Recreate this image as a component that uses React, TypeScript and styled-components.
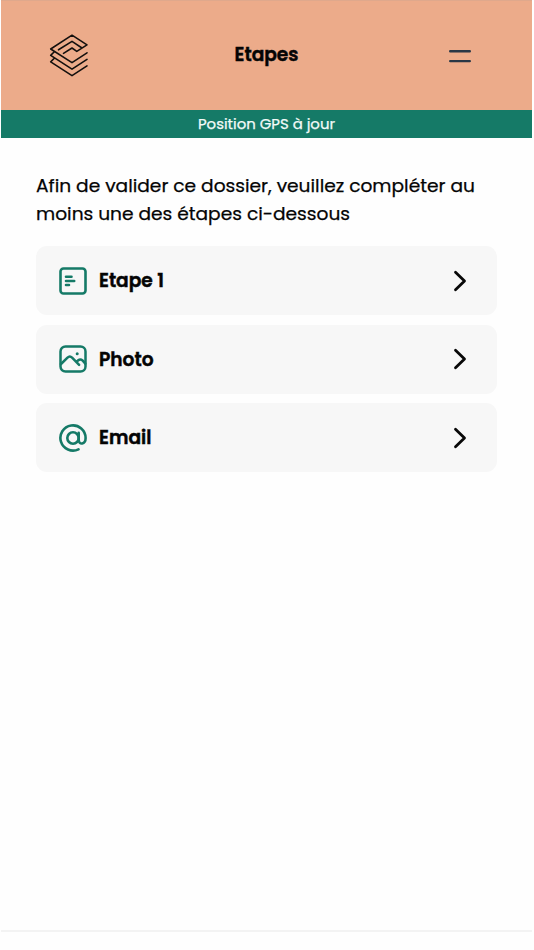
import React from "react";
import styled, { createGlobalStyle } from "styled-components";

const GlobalStyle = createGlobalStyle`
  * { box-sizing: border-box; }
  body { margin: 0; background: #fefefe; font-family: Poppins, Inter, sans-serif; color: #040404; -webkit-text-stroke: 0.25px currentColor; }
`;

const Screen = styled.div`
  height: 950px;
  margin-left: 1px;
  width: 531px;
  display: flex;
  flex-direction: column;
`;

const Header = styled.header`
  height: 110px;
  flex: none;
  background: #ecab8a;
  border-top: 1px solid #dfa88c;
  display: grid;
  grid-template-columns: 1fr auto 1fr;
  align-items: center;
  padding: 0 47px 2px;
`;

const Title = styled.h1`
  margin: 0;
  font-size: 18.6px;
  line-height: 28px;
  font-weight: 600;
  -webkit-text-stroke-width: 0.45px;
`;

const MenuButton = styled.button`
  justify-self: end;
  border: 0;
  margin: 2px 13px 0 0;
  padding: 0;
  background: none;
  display: flex;
`;

const Banner = styled.div`
  height: 28px;
  flex: none;
  background: #157a67;
  color: #f3faf8;
  font-size: 14.9px;
  line-height: 28px;
  font-weight: 400;
  text-align: center;
`;

const Main = styled.main`
  flex: 1;
  padding: 34.4px 34px 0 35px;
`;

const Intro = styled.p`
  margin: 0 0 19px;
  font-size: 18.6px;
  line-height: 27.5px;
  white-space: nowrap;
`;

const Line = styled.span`
  display: block;
`;

const Steps = styled.div`
  display: flex;
  flex-direction: column;
  gap: 9.4px;
`;

const Step = styled.button`
  height: 69px;
  width: 461px;
  border: 0;
  border-radius: 11px;
  background: #f7f7f7;
  display: flex;
  align-items: center;
  gap: 12px;
  padding: 0 29px 0 23px;
  font: inherit;
  color: inherit;
  text-align: left;
`;

const StepLabel = styled.span`
  flex: 1;
  font-size: 18.6px;
  font-weight: 600;
  -webkit-text-stroke-width: 0.45px;
`;

const Footer = styled.footer`
  height: 20px;
  border-top: 2px solid #f3f3f3;
`;

const Icon = styled.svg`
  display: block;
  flex: none;
  fill: none;
  stroke-linecap: round;
  stroke-linejoin: round;
`;

const Logo = () => (
  <Icon width="42" height="46" viewBox="0 0 42 46" stroke="#14100e" strokeWidth="1.6">
    <path d="M10.5 17.8 24 9.4l10 6.6M15.5 21.4l8.5-5.4 4.8 3.4 10.2-6.5L24 3.2 2.7 17 24 30.6l15-9.8" />
    <path d="M6.3 19.8 2.7 23.4 24 37.2l15-9.8M6.3 26.3l-3.6 3.6L24 43.7l15-9.8" />
  </Icon>
);

const FormIcon = () => (
  <Icon width="28" height="28" viewBox="0 0 28 28" stroke="#157a67" strokeWidth="2.6">
    <rect x="1.5" y="1.5" width="25" height="25" rx="3" />
    <path d="M7 9.8h5.5M7 14h8.2M7 18h3" />
  </Icon>
);

const PhotoIcon = () => (
  <Icon width="28" height="28" viewBox="0 0 28 28" stroke="#157a67" strokeWidth="2.5">
    <rect x="1.5" y="1.5" width="25" height="25" rx="5" />
    <path d="m2 19 6.5-6.4q2.3-2.2 4.6 0l7 7.2M17.5 16.9l1.8-1.6q2.1-1.8 4.2.1l2.8 3.2" />
    <circle cx="18.2" cy="8.7" r="1.5" fill="#157a67" stroke="none" />
  </Icon>
);

const AtIcon = () => (
  <Icon width="28" height="28" viewBox="0 0 28 28" stroke="#157a67" strokeWidth="2.6">
    <circle cx="14" cy="14" r="5.7" />
    <path d="M19.7 8.9v7.2c0 5.2 6.9 4.5 6.9-2.1A12.6 12.6 0 1 0 19.5 25.3" />
  </Icon>
);

const Chevron = () => (
  <Icon width="16" height="22" viewBox="0 0 16 22" stroke="#080808" strokeWidth="2.8">
    <path d="m3.5 2.2 9 8.8-9 8.8" />
  </Icon>
);

const steps = [
  { label: "Etape 1", icon: <FormIcon /> },
  { label: "Photo", icon: <PhotoIcon /> },
  { label: "Email", icon: <AtIcon /> },
];

export default function App() {
  return (
    <>
      <GlobalStyle />
      <Screen>
        <Header>
          <Logo />
          <Title>Etapes</Title>
          <MenuButton aria-label="Menu">
            <Icon width="24" height="16" viewBox="0 0 24 16" stroke="#293746" strokeWidth="2.4">
              <path d="M2.2 3.2h19.6M2.2 13.1h19.6" />
            </Icon>
          </MenuButton>
        </Header>
        <Banner>Position GPS à jour</Banner>
        <Main>
          <Intro>
            <Line>Afin de valider ce dossier, veuillez compléter au</Line>
            <Line>moins une des étapes ci-dessous</Line>
          </Intro>
          <Steps>
            {steps.map((s) => (
              <Step key={s.label}>
                {s.icon}
                <StepLabel>{s.label}</StepLabel>
                <Chevron />
              </Step>
            ))}
          </Steps>
        </Main>
        <Footer />
      </Screen>
    </>
  );
}
